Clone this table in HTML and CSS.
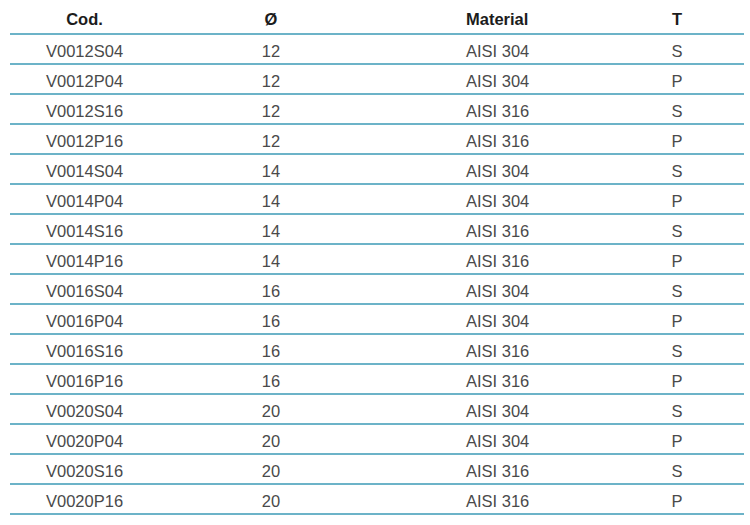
FILE: index.html
```html
<!DOCTYPE html>
<html lang="it">
<head>
<meta charset="utf-8">
<title>Tabella codici</title>
<link rel="stylesheet" href="styles.css">
</head>
<body>
<div class="table" role="table">
  <div class="row head" role="row">
    <div class="c1" role="columnheader">Cod.</div>
    <div class="c2" role="columnheader">Ø</div>
    <div class="c3" role="columnheader">Material</div>
    <div class="c4" role="columnheader">T</div>
  </div>
  <div class="row" role="row"><div class="c1">V0012S04</div><div class="c2">12</div><div class="c3">AISI 304</div><div class="c4">S</div></div>
  <div class="row" role="row"><div class="c1">V0012P04</div><div class="c2">12</div><div class="c3">AISI 304</div><div class="c4">P</div></div>
  <div class="row" role="row"><div class="c1">V0012S16</div><div class="c2">12</div><div class="c3">AISI 316</div><div class="c4">S</div></div>
  <div class="row" role="row"><div class="c1">V0012P16</div><div class="c2">12</div><div class="c3">AISI 316</div><div class="c4">P</div></div>
  <div class="row" role="row"><div class="c1">V0014S04</div><div class="c2">14</div><div class="c3">AISI 304</div><div class="c4">S</div></div>
  <div class="row" role="row"><div class="c1">V0014P04</div><div class="c2">14</div><div class="c3">AISI 304</div><div class="c4">P</div></div>
  <div class="row" role="row"><div class="c1">V0014S16</div><div class="c2">14</div><div class="c3">AISI 316</div><div class="c4">S</div></div>
  <div class="row" role="row"><div class="c1">V0014P16</div><div class="c2">14</div><div class="c3">AISI 316</div><div class="c4">P</div></div>
  <div class="row" role="row"><div class="c1">V0016S04</div><div class="c2">16</div><div class="c3">AISI 304</div><div class="c4">S</div></div>
  <div class="row" role="row"><div class="c1">V0016P04</div><div class="c2">16</div><div class="c3">AISI 304</div><div class="c4">P</div></div>
  <div class="row" role="row"><div class="c1">V0016S16</div><div class="c2">16</div><div class="c3">AISI 316</div><div class="c4">S</div></div>
  <div class="row" role="row"><div class="c1">V0016P16</div><div class="c2">16</div><div class="c3">AISI 316</div><div class="c4">P</div></div>
  <div class="row" role="row"><div class="c1">V0020S04</div><div class="c2">20</div><div class="c3">AISI 304</div><div class="c4">S</div></div>
  <div class="row" role="row"><div class="c1">V0020P04</div><div class="c2">20</div><div class="c3">AISI 304</div><div class="c4">P</div></div>
  <div class="row" role="row"><div class="c1">V0020S16</div><div class="c2">20</div><div class="c3">AISI 316</div><div class="c4">S</div></div>
  <div class="row" role="row"><div class="c1">V0020P16</div><div class="c2">20</div><div class="c3">AISI 316</div><div class="c4">P</div></div>
</div>
</body>
</html>
```
FILE: styles.css
```css
html, body {
  margin: 0;
  padding: 0;
  background: #ffffff;
}
body {
  font-family: "Liberation Sans", Arial, Helvetica, sans-serif;
  font-size: 16.5px;
  color: #4a4a4a;
}
.table {
  margin-left: 10px;
  width: 734px;
}
.row {
  display: grid;
  grid-template-columns: 149px 224px 227px 134px;
  height: 28px;
  border-bottom: 2px solid #6cb3c8;
  line-height: 24px;
  box-sizing: content-box;
}
.row > div {
  padding-top: 4px;
  white-space: nowrap;
}
.row.head {
  height: 33px;
  line-height: 28px;
  font-weight: bold;
  color: #1c1c1c;
}
.row.head > div {
  padding-top: 5px;
}
.c1 {
  padding-left: 36px;
}
.head .c1 {
  padding-left: 0;
  text-align: center;
}
.c2 {
  text-align: center;
}
.c3 {
  padding-left: 83px;
}
.c4 {
  text-align: center;
}
```
